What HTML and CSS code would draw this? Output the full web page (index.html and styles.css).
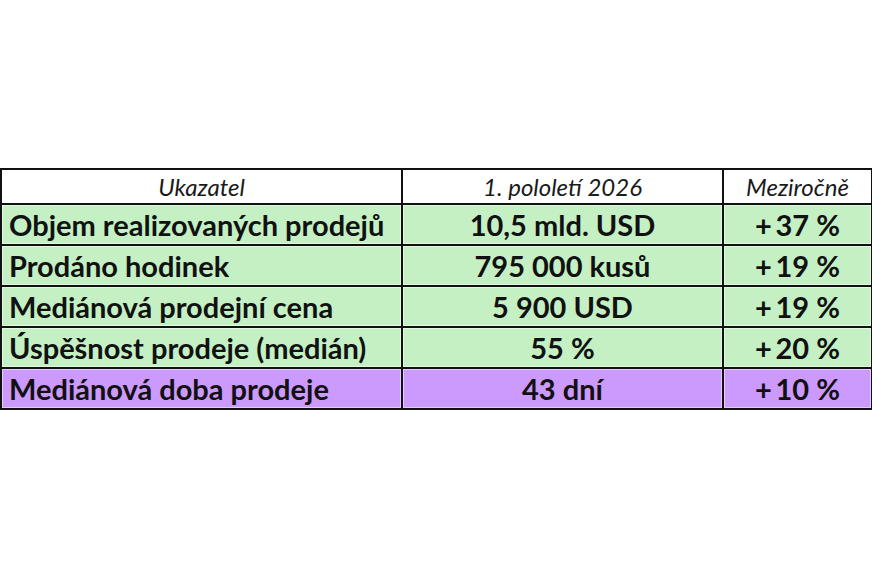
FILE: index.html
```html
<!DOCTYPE html>
<html lang="cs">
<head>
<meta charset="utf-8">
<title>Ukazatel</title>
<link rel="stylesheet" href="styles.css">
</head>
<body>
<div class="page">
  <table class="stats">
    <colgroup>
      <col class="c1"><col class="c2"><col class="c3">
    </colgroup>
    <thead>
      <tr class="head">
        <th>Ukazatel</th>
        <th>1. pololetí 2026</th>
        <th>Meziročně</th>
      </tr>
    </thead>
    <tbody>
      <tr class="green">
        <td class="label">Objem realizovaných prodejů</td>
        <td>10,5 mld. USD</td>
        <td>+&#8201;37 %</td>
      </tr>
      <tr class="green">
        <td class="label">Prodáno hodinek</td>
        <td>795 000 kusů</td>
        <td>+&#8201;19 %</td>
      </tr>
      <tr class="green">
        <td class="label">Mediánová prodejní cena</td>
        <td>5 900 USD</td>
        <td>+&#8201;19 %</td>
      </tr>
      <tr class="green">
        <td class="label">Úspěšnost prodeje (medián)</td>
        <td>55 %</td>
        <td>+&#8201;20 %</td>
      </tr>
      <tr class="purple">
        <td class="label">Mediánová doba prodeje</td>
        <td>43 dní</td>
        <td>+&#8201;10 %</td>
      </tr>
    </tbody>
  </table>
</div>
</body>
</html>
```

FILE: styles.css
```css
html, body {
  margin: 0;
  padding: 0;
  background: #ffffff;
}

.page {
  width: 872px;
  height: 580px;
  padding-top: 168px;
  box-sizing: border-box;
}

.stats {
  width: 871px;
  border-collapse: collapse;
  border: 2px solid #111;
  font-family: Lato, "Open Sans", sans-serif;
  color: #111;
  table-layout: fixed;
}

.c1 { width: 401px; }
.c2 { width: 321px; }
.c3 { width: 149px; }

.stats th,
.stats td {
  border: 2px solid #111;
  text-align: center;
  padding: 0;
  line-height: 1;
  box-shadow: inset 0 0 0 1px rgba(255, 255, 255, 0.5);
}

.head th {
  height: 33px;
  font-size: 24px;
  font-style: italic;
  font-weight: 400;
  background: #ffffff;
  color: #1a1a1a;
}

.stats td {
  height: 39px;
  font-size: 29px;
  font-weight: 700;
}

.stats td.label {
  text-align: left;
  padding-left: 7px;
}

.green td {
  background: #c4f0c4;
}

.purple td {
  background: #cc99fc;
}
```
